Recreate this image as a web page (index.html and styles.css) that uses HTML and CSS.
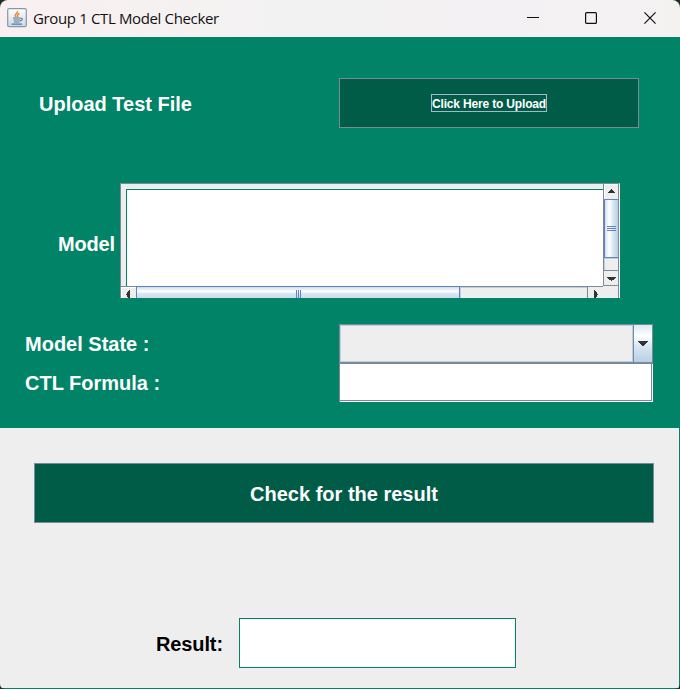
FILE: index.html
```
<!DOCTYPE html>
<html lang="en">
<head>
<meta charset="utf-8">
<title>Group 1 CTL Model Checker</title>
<link rel="stylesheet" href="styles.css">
</head>
<body>
<div class="window">
  <header class="titlebar">
    <svg class="java" width="20" height="20" viewBox="0 0 20 20">
      <defs><linearGradient id="tile" x2="0" y2="1"><stop offset="0" stop-color="#fff"/><stop offset="1" stop-color="#c9d8e5"/></linearGradient></defs>
      <rect x=".7" y=".7" width="18.6" height="18" rx="1.5" fill="url(#tile)" stroke="#8298ad" stroke-width="1.2"/>
      <path d="M10.5 3c1 2-3.6 3.200-1.900 5.200L9.300 9.500M12.500 5.500c-2.500 1.200-2.500 2-1.500 3.500" fill="none" stroke="#f0852b" stroke-width="1.400"/>
      <path d="M6 10h7.500M6.500 12h6.500M7 14h5.500M4.500 16.200h10.500M13.500 10.500c2.500-.7 2.300 1.800-.5 2.400" fill="none" stroke="#567b9c" stroke-width="1.200"/>
    </svg>
    <h1 class="title">Group 1 CTL Model Checker</h1>
    <div class="controls">
      <svg width="12" height="12" viewBox="0 0 12 12"><path d="M0 5.500h12"/></svg>
      <svg width="12" height="12" viewBox="0 0 12 12"><rect x=".6" y=".6" width="10.800" height="10.800" rx="1"/></svg>
      <svg width="12" height="12" viewBox="0 0 12 12"><path d="M.4.400l11.200 11.200M11.600.400L.4 11.600"/></svg>
    </div>
  </header>
  <main class="form">
    <div class="upload-row">
      <span class="label upload-label">Upload Test File</span>
      <button class="button upload"><span class="focus"><span class="caption">Click Here to Upload</span></span></button>
    </div>
    <div class="model-row">
      <span class="label model-label">Model</span>
      <div class="scrollpane">
        <div class="viewport"><div class="textarea"></div></div>
        <div class="vbar">
          <div class="arrow-box up"><svg width="9" height="4" viewBox="0 0 9 4" shape-rendering="crispEdges"><path d="M4 0h1v1h1v1h1v1h1v1H1V3h1V2h1V1h1z"/></svg></div>
          <div class="vthumb"><i></i><i></i><i></i></div>
          <div class="vtrack"></div>
          <div class="arrow-box down"><svg width="9" height="4" viewBox="0 0 9 4" shape-rendering="crispEdges"><path d="M0 0h9v1H8v1H7v1H5v1H4V3H2V2H1V1H0z"/></svg></div>
        </div>
        <div class="hbar">
          <div class="arrow-box left"><svg width="4" height="9" viewBox="0 0 4 9" shape-rendering="crispEdges"><path d="M4 0v9H3V8H2V7H1V5H0V4h1V2h1V1h1V0z"/></svg></div>
          <div class="hthumb"><i></i><i></i><i></i></div>
          <div class="htrack"></div>
          <div class="arrow-box right"><svg width="4" height="9" viewBox="0 0 4 9" shape-rendering="crispEdges"><path d="M0 0v9h1V8h1V7h1V5h1V4H3V2H2V1H1V0z"/></svg></div>
        </div>
        <div class="corner"></div>
      </div>
    </div>
    <div class="fields">
      <span class="label state-label">Model State :</span>
      <div class="combo">
        <div class="combo-value"></div>
        <div class="combo-arrow"><svg width="10" height="5" viewBox="0 0 10 5" shape-rendering="crispEdges"><path d="M0 0h10v1H9v1H8v1H7v1H6v1H4V4H3V3H2V2H1V1H0z"/></svg></div>
      </div>
      <span class="label formula-label">CTL Formula :</span>
      <div class="textfield"><div class="textfield-inner"></div></div>
    </div>
  </main>
  <section class="results">
    <button class="button check"><span class="check-label">Check for the result</span></button>
    <div class="result-row">
      <span class="label result-label">Result:</span>
      <div class="result-field"></div>
    </div>
  </section>
</div>
</body>
</html>
```
FILE: styles.css
```
* { box-sizing: border-box; }
body { margin: 0; background: #292929; }
.window {
  width: 680px; height: 689px; overflow: hidden;
  border-radius: 8px 8px 5px 5px;
  background: #008366;
  font-family: "Liberation Sans", Arial, sans-serif;
}
.titlebar {
  height: 37px; display: flex; align-items: center;
  padding: 0 24px 0 7px;
  background: linear-gradient(90deg, #f9eff0, #f3f2f2 40%, #f3f1f3 75%, #f4f2f1);
}
.java { margin-top: -2px; }
.title {
  margin: -2px 0 0 6px; flex: 1;
  font: 400 15px/20px "Open Sans", "Noto Sans", sans-serif;
  color: #111; white-space: nowrap; letter-spacing: -0.36px;
}
.controls { display: flex; gap: 47px; margin-top: -1px; }
.controls svg { fill: none; stroke: #111; stroke-width: 1.2; }
.controls svg:first-child { margin-right: -1px; }
.form { height: 391px; padding-top: 41px; }
.label, .check-label {
  font-weight: 700; font-size: 20px; line-height: 24px;
  color: #fff; white-space: nowrap;
}
.upload-row { display: flex; align-items: center; height: 50px; padding-left: 39px; }
.upload-label { width: 300px; padding-top: 2px; }
.button {
  padding: 0; border: 1px solid #7a8a99; border-radius: 0;
  background: #005c47; color: #fff; font-family: inherit;
  display: flex; align-items: center; justify-content: center;
}
.upload { width: 300px; height: 50px; }
.focus {
  width: 116px; height: 18px; border: 1px solid #a3b8cc;
  display: flex; align-items: center; justify-content: center;
  font-size: 12px; font-weight: 700; line-height: 16px; white-space: nowrap;
  letter-spacing: -0.17px;
}
.caption { padding-top: 2px; }
.check-label { padding-top: 2px; }
.model-row { display: flex; align-items: center; margin-top: 55px; height: 115px; padding-left: 58px; }
.model-label { width: 62px; margin-top: 7px; letter-spacing: -0.2px; }
.scrollpane {
  width: 500px; height: 115px; overflow: hidden;
  display: grid; grid-template-columns: 482px 16px; grid-template-rows: 102px 12px;
  border: solid #7a8a99; border-width: 1px 0 0 1px;
  border-right: 1px solid #fff;
  background: #eee;
}
.viewport { padding: 5px 0 0 5px; }
.textarea { height: 97px; background: #fff; border: solid #008366; border-width: 1px 0 0 1px; }
.vbar {
  display: flex; flex-direction: column; border: solid #7a8a99; border-width: 0 1px;
}
.arrow-box { display: flex; align-items: center; justify-content: center; background: #eee; }
.arrow-box svg { fill: #333; }
.up { height: 15px; padding-top: 4px; align-items: flex-start; border: solid #fff; border-width: 1px 0 0 1px; }
.vthumb {
  height: 59px; border: solid #6382bf; border-width: 1px 0 1px 1px;
  background: linear-gradient(90deg, #c8d9eb 0, #e3ecf5 10%, #fff 35%, #dce8f3 60%, #b8cfe5);
  display: flex; flex-direction: column; align-items: center; justify-content: center; gap: 1px;
}
.vthumb i { width: 9px; height: 1px; background: #6382bf; }
.vtrack { height: 12px; border-left: 1px solid #b8cfe5; border-top: 1px solid #b8cfe5; }
.down { height: 16px; padding-top: 6px; align-items: flex-start; border: solid #7a8a99; border-width: 1px 0; }
.hbar { display: flex; border-top: 1px solid #7a8a99; height: 12px; }
.left { width: 15px; padding: 2px 1px 0 0; align-items: flex-start; border: solid #fff; border-width: 1px 0 0 1px; }
.left svg { margin-right: 1px; }
.hthumb {
  width: 324px; margin-top: -1px; height: 12px;
  border: solid #6382bf; border-width: 1px 1px 0;
  background: linear-gradient(#c8d9eb, #e3ecf5 15%, #fff 42%, #dce8f3 58%, #cbdbea);
  display: flex; justify-content: center; gap: 1px; padding-top: 3px;
}
.hthumb i { width: 1px; height: 8px; background: #6382bf; }
.htrack { flex: 1; border-top: 1px solid #b8cfe5; border-left: 1px solid #b8cfe5; }
.right { width: 16px; padding-top: 3px; align-items: flex-start; border: solid #7a8a99; border-width: 0 0 0 1px; }
.corner { border-left: 1px solid #eee; border-right: 1px solid #7a8a99; }
.fields {
  display: grid; grid-template-columns: 314px 314px; grid-template-rows: 39px 39px;
  align-items: center; margin-top: 26px; padding-left: 25px;
}
.combo { display: flex; height: 39px; border: 1px solid #7a8a99; }
.combo-value { flex: 1; background: #eee; border: 1px solid #b8cfe5; }
.combo-arrow {
  width: 19px; border-left: 1px solid #7a8a99;
  display: flex; align-items: center; justify-content: center;
  background: linear-gradient(#dde8f3, #fff 30%, #dbe7f2 55%, #b8cfe5);
}
.combo-arrow svg { fill: #333; }
.textfield { height: 39px; background: #fff; border: solid #7a8a99; border-width: 1px 0 0 1px; padding: 0 1px 1px 0; }
.textfield-inner { height: 37px; border: solid #7a8a99; border-width: 0 1px 1px 0; }
.results { width: 679px; height: 260px; background: #eee; padding: 35px 0 0 34px; }
.check { width: 620px; height: 60px; }
.result-row { display: flex; align-items: center; margin: 95px 0 0 122px; }
.result-label { width: 83px; color: #000; padding-top: 2px; letter-spacing: -0.12px; }
.result-field { width: 277px; height: 50px; border: 1px solid #008366; background: #fff; }
```
